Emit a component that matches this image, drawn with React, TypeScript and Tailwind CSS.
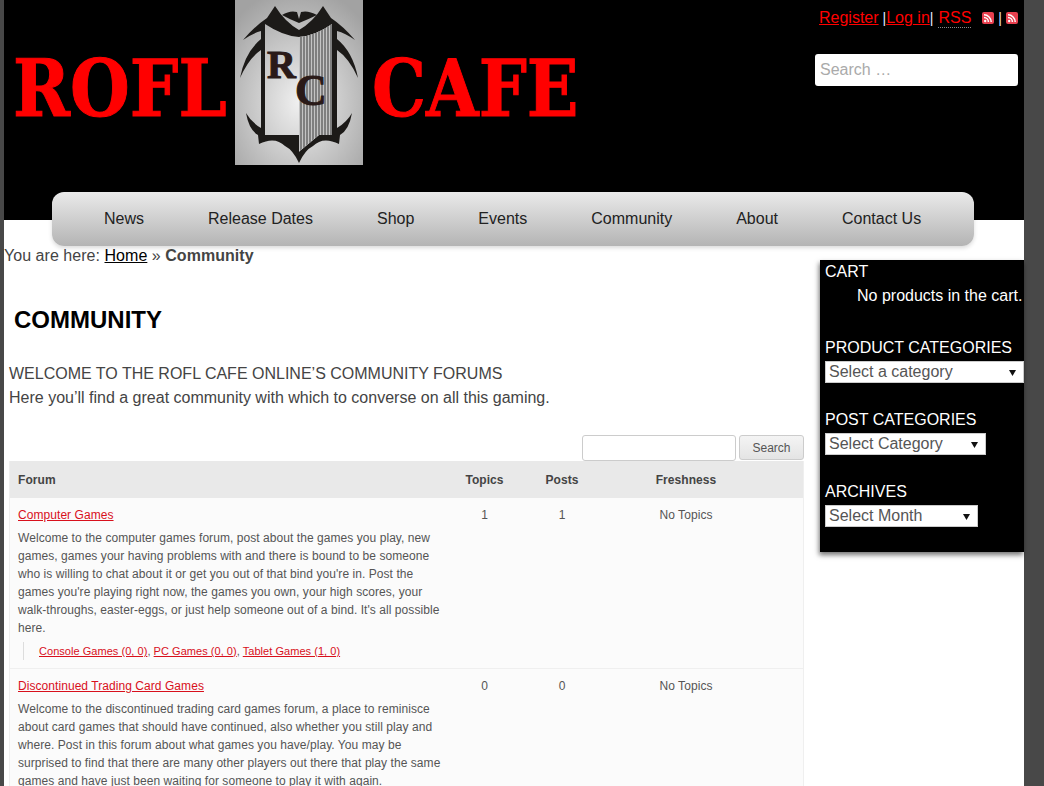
const font = "font-['Liberation_Sans',Arial,sans-serif]";

const navItems = ["News", "Release Dates", "Shop", "Events", "Community", "About", "Contact Us"];

function RssIcon() {
  return (
    <svg width="12" height="12" viewBox="0 0 12 12" className="inline-block">
      <rect width="12" height="12" rx="2" fill="#e8404f" />
      <circle cx="3.2" cy="9" r="1.2" fill="#fff" />
      <path d="M2 5.6a4.4 4.4 0 0 1 4.4 4.4M2 2.8A7.2 7.2 0 0 1 9.2 10" stroke="#fff" strokeWidth="1.5" fill="none" />
    </svg>
  );
}

function Emblem() {
  const stripes = [66, 69, 72, 75, 78, 81, 84, 87, 90, 93, 96];
  return (
    <svg width="128" height="165" viewBox="0 0 128 165" className="shrink-0">
      <defs>
        <radialGradient id="bg" cx="50%" cy="62%" r="70%">
          <stop offset="0%" stopColor="#f0f0f0" />
          <stop offset="100%" stopColor="#a2a2a2" />
        </radialGradient>
        <clipPath id="stripes">
          <path d="M64 37Q80 36 97 24V135H84L66 150H64Z" />
        </clipPath>
      </defs>
      <rect width="128" height="165" fill="url(#bg)" />
      <path
        d="M64 30Q78 22 88 6L96 18Q108 26 120 40Q110 33 102 31L102 39Q118 52 123 78Q114 58 102 50L102 128Q112 122 117 113Q114 130 105 135L104 144Q88 136 78 146Q70 150 64 163Q58 150 50 146Q40 136 24 144L23 135Q14 130 11 113Q16 122 26 128L26 50Q14 58 5 78Q10 52 26 39L26 31Q18 33 8 40Q20 26 32 18L40 6Q50 22 64 30ZM30 24Q48 36 64 37Q80 36 97 24V135H84L66 150 64 152V135H30Z"
        fill="#1c1a18"
        fillRule="evenodd"
      />
      <path d="M47 15Q55 10 62 12L64 19 66 12Q73 10 82 15Q74 19 64 23Q54 19 47 15Z" fill="#1c1a18" />
      <g clipPath="url(#stripes)">
        <rect x="64" y="20" width="34" height="135" fill="#c4c4c4" />
        {stripes.map((x) => (
          <path key={x} d={`M${x} 20V155`} stroke="#6e6e6e" strokeWidth="1.6" />
        ))}
      </g>
      <text x="32" y="78" fontFamily="'Liberation Serif',serif" fontWeight="700" fontSize="40" fill="#2a1a18" stroke="#2a1a18" strokeWidth="1">R</text>
      <text x="60" y="105" fontFamily="'Liberation Serif',serif" fontWeight="700" fontSize="44" fill="#2a1a18" stroke="#2a1a18" strokeWidth="1">C</text>
    </svg>
  );
}

function SelectBox({ label, width }: { label: string; width: string }) {
  return (
    <div className={`relative mt-[4px] h-[22px] ${width}`}>
      <select className="block h-full w-full appearance-none rounded-none border border-[#ccc] bg-white pl-[3px] text-[16px] leading-[20px] text-[#555]">
        <option>{label}</option>
      </select>
      <svg width="7" height="6" viewBox="0 0 7 6" className="absolute top-[9px] right-[8px]">
        <path d="M0 0H7L3.500 6Z" fill="#111" />
      </svg>
    </div>
  );
}

function ForumRow({
  title,
  topics,
  posts,
  desc,
  subs,
}: {
  title: string;
  topics: number;
  posts: number;
  desc: string[];
  subs?: string[];
}) {
  return (
    <div className="flex border-b border-[#efefef] bg-[#fbfbfb] text-[12px] leading-[18px] tracking-[0.06px] text-[#555]">
      <div className="w-[435px] shrink-0 pl-2 pt-[8px] pb-[8px]">
        <a className="text-[#d8101c] underline">{title}</a>
        <div className="mt-[5px]">
          {desc.map((line) => (
            <div key={line} className="whitespace-nowrap">{line}</div>
          ))}
        </div>
        {subs && (
          <div className="ml-[5px] mt-[5px] border-l border-[#ddd] pl-[15px] text-[11px] leading-[18px] tracking-[0.04px] whitespace-nowrap">
            {subs.map((s, i) => (
              <span key={s}>
                <a className="text-[#d8101c] underline">{s}</a>
                {i < subs.length - 1 ? ", " : ""}
              </span>
            ))}
          </div>
        )}
      </div>
      <div className="w-[79px] shrink-0 pt-[8px] text-center">{topics}</div>
      <div className="w-[76px] shrink-0 pt-[8px] text-center">{posts}</div>
      <div className="w-[172px] shrink-0 pt-[8px] text-center">No Topics</div>
    </div>
  );
}

export default function App() {
  return (
    <div className={`${font} flex h-[786px] w-[1044px] overflow-hidden bg-[#484848]`}>
      <div className="ml-[4px] w-[1020px] shrink-0 bg-white">
        <header className="flex h-[192px] bg-black">
          <div className="flex h-[165px] items-start pl-[9px]">
            <span className="mt-[39px] w-[222px] origin-left scale-x-[0.88] [font-family:'DejaVu_Serif',serif] text-[78px] leading-[100px] font-bold text-[#f00] [-webkit-text-stroke:1px_#f00]">
              ROFL
            </span>
            <Emblem />
            <span className="mt-[39px] ml-[9px] w-[210px] origin-left scale-x-[0.87] [font-family:'DejaVu_Serif',serif] text-[78px] leading-[100px] font-bold text-[#f00] [-webkit-text-stroke:1px_#f00]">
              CAFE
            </span>
          </div>
          <div className="ml-auto flex w-[215px] flex-col items-end pr-[6px]">
            <div className="mt-[8px] flex h-[20px] items-center whitespace-nowrap text-[16px] text-[#e8e8ff]">
              <a className="text-[#f00] underline">Register</a>
              <span className="ml-[4px] text-[14px]">|</span>
              <a className="text-[#f00] underline">Log in</a>
              <span className="text-[14px]">|</span>
              <span className="ml-[5px] border-b border-dotted border-[#888] leading-[18px] text-[#f00]">RSS</span>
              <span className="ml-[11px] flex items-center"><RssIcon /></span>
              <span className="mx-[4px] text-[14px]">|</span>
              <RssIcon />
            </div>
            <input
              readOnly
              placeholder="Search …"
              className="mt-[26px] h-[32px] w-[203px] rounded-[3px] bg-white px-[5px] text-[16px] outline-none placeholder:text-[#aaa]"
            />
          </div>
        </header>

        <div className="bg-[linear-gradient(#000_28px,#fff_28px)] pl-[48px]">
          <nav className="flex h-[54px] w-[922px] items-center rounded-[12px] bg-[linear-gradient(#eaeaea,#b4b4b4)] pl-[52px] text-[16px] whitespace-nowrap text-[#222] shadow-[0_2px_4px_rgba(0,0,0,0.15)]">
            <div className="flex gap-[64px]">
              {navItems.map((n) => (
                <a key={n}>{n}</a>
              ))}
            </div>
          </nav>
        </div>

        <div className="flex">
          <main className="w-[800px] shrink-0">
            <div className="h-[18px] text-[16px] leading-[20px] tracking-[0.04px] whitespace-nowrap text-[#444]">
              You are here: <a className="text-black underline">Home</a> » <strong>Community</strong>
            </div>
            <h1 className="mt-[42px] ml-[10px] text-[24px] leading-[28px] font-bold text-black">COMMUNITY</h1>
            <div className="mt-[28px] ml-[5px] text-[16px] leading-[24px] text-[#444]">
              <div>WELCOME TO THE ROFL CAFE ONLINE’S COMMUNITY FORUMS</div>
              <div>Here you’ll find a great community with which to converse on all this gaming.</div>
            </div>
            <div className="mt-[25px] flex justify-end gap-[3px]">
              <input readOnly className="h-[26px] w-[154px] rounded-[3px] border border-[#ccc] bg-white" />
              <button className="h-[25px] w-[65px] rounded-[3px] border border-[#ccc] bg-[linear-gradient(#f4f4f4,#e4e4e4)] text-[12px] text-[#555]">
                Search
              </button>
            </div>
            <section className="ml-[5px] w-[795px] border-x border-[#efefef]">
              <div className="flex h-[37px] items-center bg-[#e9e9e9] text-[12px] font-bold tracking-[0.06px] text-[#444]">
                <div className="w-[435px] shrink-0 pl-2">Forum</div>
                <div className="w-[79px] shrink-0 text-center">Topics</div>
                <div className="w-[76px] shrink-0 text-center">Posts</div>
                <div className="w-[172px] shrink-0 text-center">Freshness</div>
              </div>
              <ForumRow
                title="Computer Games"
                topics={1}
                posts={1}
                desc={[
                  "Welcome to the computer games forum, post about the games you play, new",
                  "games, games your having problems with and there is bound to be someone",
                  "who is willing to chat about it or get you out of that bind you're in. Post the",
                  "games you're playing right now, the games you own, your high scores, your",
                  "walk-throughs, easter-eggs, or just help someone out of a bind. It's all possible",
                  "here.",
                ]}
                subs={["Console Games (0, 0)", "PC Games (0, 0)", "Tablet Games (1, 0)"]}
              />
              <ForumRow
                title="Discontinued Trading Card Games"
                topics={0}
                posts={0}
                desc={[
                  "Welcome to the discontinued trading card games forum, a place to reminisce",
                  "about card games that should have continued, also whether you still play and",
                  "where. Post in this forum about what games you have/play. You may be",
                  "surprised to find that there are many other players out there that play the same",
                  "games and have just been waiting for someone to play it with again.",
                ]}
              />
            </section>
          </main>

          <aside className="mt-[14px] ml-[16px] h-[292px] w-[204px] shrink-0 bg-black pl-[5px] text-[16px] text-white shadow-[-1px_3px_5px_rgba(0,0,0,0.55)]">
            <div className="mt-[3px] leading-[18px]">CART</div>
            <div className="mt-[6px] ml-[32px] leading-[18px] whitespace-nowrap">No products in the cart.</div>
            <div className="mt-[34px] leading-[18px]">PRODUCT CATEGORIES</div>
            <SelectBox label="Select a category" width="w-[199px]" />
            <div className="mt-[28px] leading-[18px]">POST CATEGORIES</div>
            <SelectBox label="Select Category" width="w-[161px]" />
            <div className="mt-[28px] leading-[18px]">ARCHIVES</div>
            <SelectBox label="Select Month" width="w-[153px]" />
          </aside>
        </div>
      </div>
    </div>
  );
}
